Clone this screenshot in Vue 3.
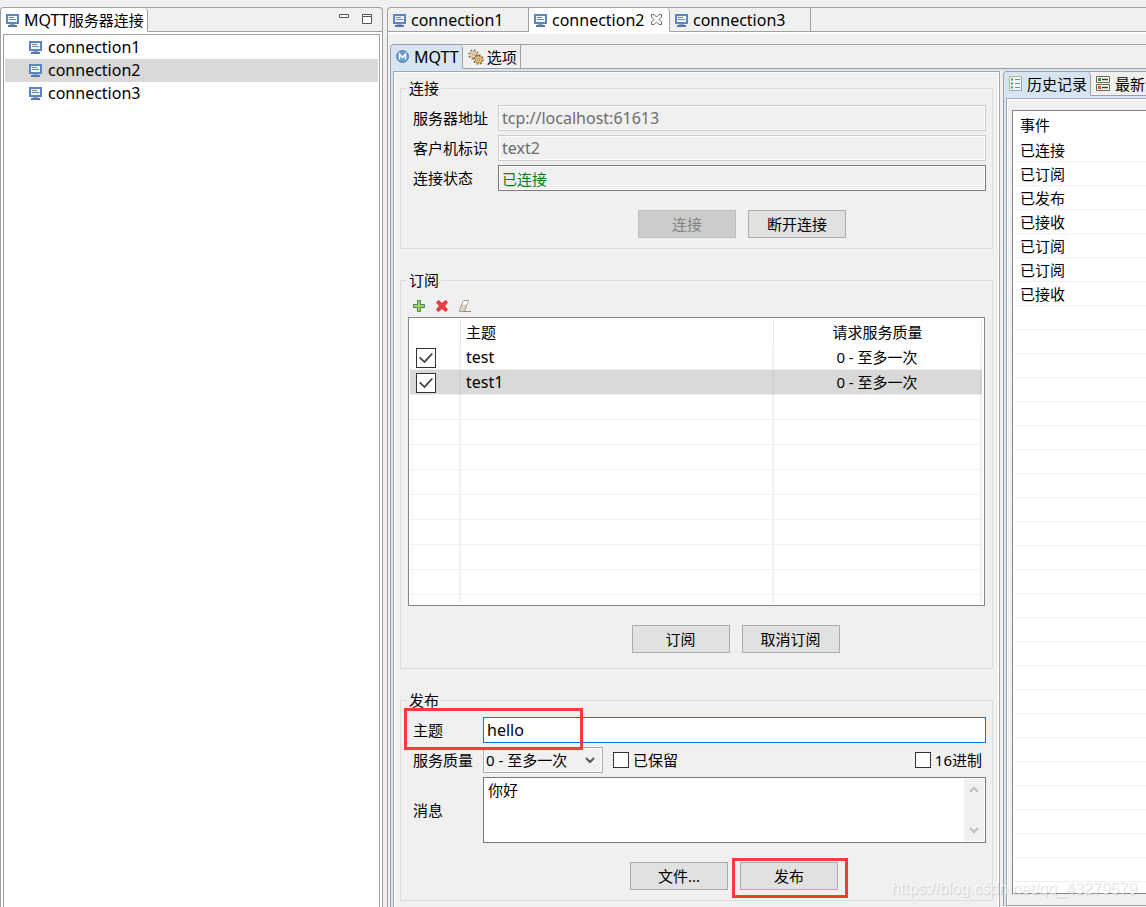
<script setup>
import { ref, h } from 'vue'

const connections = ['connection1', 'connection2', 'connection3']
const active = ref('connection2')
const subscriptions = ref([
  { topic: 'test', qos: '0 - 至多一次', on: true },
  { topic: 'test1', qos: '0 - 至多一次', on: true },
])
const selectedRow = ref(1)
const events = ['已连接', '已订阅', '已发布', '已接收', '已订阅', '已订阅', '已接收']
const emptyEvents = 25
const server = ref('tcp://localhost:61613')
const client = ref('text2')
const topic = ref('hello')
const qos = ref('0 - 至多一次')
const message = ref('你好')
const retained = ref(false)
const hex = ref(false)

const MonitorIcon = () =>
  h('svg', { width: 13, height: 14, viewBox: '0 -1 13 14', 'aria-hidden': 'true' }, [
    h('path', { d: 'M0 0h13v10H0z', fill: '#5b86bd' }),
    h('path', { d: 'M2 2h9v6H2z', fill: '#f1f6fc' }),
    h('path', { d: 'M3 3h5v1H3zM3 5h7v1H3z', fill: '#7187ad' }),
    h('path', { d: 'M4 10h5v1H4z', fill: '#8fa6c8' }),
    h('path', { d: 'M2 11h9v2H2z', fill: '#5876a8' }),
  ])
</script>

<template>
  <div class="workbench">
    <section class="folder explorer">
      <div class="tabs">
        <button class="tab selected white"><MonitorIcon /><span><span class="latin">MQTT</span>服务器连接</span></button>
        <div class="filler">
          <button class="tool" aria-label="最小化">
            <svg width="10" height="10" viewBox="0 0 10 10"><path d="M.5.5h9v3h-9z" fill="#fff" stroke="#555" /></svg>
          </button>
          <button class="tool" aria-label="最大化">
            <svg width="10" height="10" viewBox="0 0 10 10"><path d="M.5.5h9v9h-9zM0 2.500h10" fill="#fff" stroke="#555" /></svg>
          </button>
        </div>
      </div>
      <div class="tree-frame">
        <ul class="tree">
          <li v-for="c in connections" :key="c" class="latin" :class="{ chosen: c === active }"><MonitorIcon />{{ c }}</li>
        </ul>
      </div>
    </section>

    <section class="folder editors">
      <div class="tabs">
        <button v-for="c in connections" :key="c" class="tab wide latin" :class="{ 'selected white': c === active }" @click="active = c">
          <MonitorIcon />{{ c }}
          <svg v-if="c === active" class="close" width="11" height="11" viewBox="0 0 11 11">
            <path d="M.5.5h2.500l2.500 2.500L8 .5h2.500V3L8 5.500l2.500 2.500v2.500H8L5.500 8 3 10.500H.5V8L3 5.500.5 3z" fill="#fff" stroke="#666" />
          </svg>
        </button>
        <div class="filler"></div>
      </div>

      <div class="editor-body">
        <div class="folder inner">
          <div class="tabs">
            <button class="tab selected blue latin">
              <svg width="13" height="13" viewBox="0 0 13 13"><circle cx="6.500" cy="6.500" r="6" fill="#6a9bc9" stroke="#4f83b5" /><path d="M3.500 9.500V4l3 3.500 3-3.500v5.500" fill="none" stroke="#fff" stroke-width="1.500" /></svg>MQTT
            </button>
            <button class="tab options">
              <svg width="16" height="16" viewBox="0 0 16 16">
                <circle cx="5.500" cy="5.500" r="4.500" fill="none" stroke="#8a6a4a" stroke-width="1.500" stroke-dasharray="1.800 1.700" />
                <circle cx="5.500" cy="5.500" r="3" fill="#f6ead0" stroke="#b5976e" />
                <circle cx="5.500" cy="5.500" r="1" fill="#fff" stroke="#a5845c" />
                <circle cx="10.500" cy="10.500" r="4.500" fill="none" stroke="#87602f" stroke-width="1.500" stroke-dasharray="1.800 1.700" />
                <circle cx="10.500" cy="10.500" r="3.500" fill="#f8dc94" stroke="#a98048" />
                <circle cx="10.500" cy="10.500" r="1.300" fill="#fff" stroke="#8c6534" />
              </svg>选项
            </button>
            <div class="filler"></div>
          </div>

          <div class="panes">
            <form class="form" @submit.prevent>
              <fieldset>
                <legend>连接</legend>
                <div class="fields connect">
                  <label for="server">服务器地址</label>
                  <input id="server" v-model="server" class="text off latin" disabled />
                  <label for="client">客户机标识</label>
                  <input id="client" v-model="client" class="text off latin" disabled />
                  <label for="state">连接状态</label>
                  <input id="state" class="text state" value="已连接" readonly />
                  <div class="buttons">
                    <button class="btn" disabled>连接</button>
                    <button class="btn">断开连接</button>
                  </div>
                </div>
              </fieldset>

              <fieldset class="subs">
                <legend>订阅</legend>
                <div class="toolbar">
                  <button class="tool" aria-label="添加">
                    <svg width="14" height="14" viewBox="0 0 14 14"><path d="M5.500 1.500h3v4h4v3h-4v4h-3v-4h-4v-3h4z" fill="#a9cf55" stroke="#3f8f5b" /></svg>
                  </button>
                  <button class="tool" aria-label="移除">
                    <svg width="14" height="14" viewBox="0 0 14 14"><path d="M1.500 3.500l2-2L7 4.500l3.500-3 2 2L9.500 7l3 3.500-2 2L7 9.500l-3.500 3-2-2L4.500 7z" fill="#ee3f45" stroke="#d2343a" /></svg>
                  </button>
                  <button class="tool" aria-label="清除">
                    <svg width="14" height="14" viewBox="0 0 14 14"><path d="M5.500 1.500h5L6.500 12.500h-5v-2z" fill="#ddd3c4" stroke="#aa9c8a" /><path d="M5.500 2h4.500L8.500 5.500H4.500z" fill="#fff" /><path d="M6 12.500h7" stroke="#a08c72" /></svg>
                  </button>
                </div>
                <div class="grid-frame">
                  <table class="grid">
                    <colgroup><col class="c-check" /><col class="c-topic" /><col class="c-qos" /></colgroup>
                    <thead>
                      <tr><th></th><th>主题</th><th>请求服务质量</th></tr>
                    </thead>
                    <tbody>
                      <tr v-for="(s, i) in subscriptions" :key="s.topic" :class="{ chosen: i === selectedRow }" @click="selectedRow = i">
                        <td><input v-model="s.on" type="checkbox" class="check big" :aria-label="s.topic" /></td>
                        <td class="latin">{{ s.topic }}</td>
                        <td>{{ s.qos }}</td>
                      </tr>
                      <tr v-for="n in 8" :key="n"><td></td><td></td><td></td></tr>
                      <tr class="rest"><td></td><td></td><td></td></tr>
                    </tbody>
                  </table>
                </div>
                <div class="buttons under-grid">
                  <button class="btn">订阅</button>
                  <button class="btn">取消订阅</button>
                </div>
              </fieldset>

              <fieldset>
                <legend>发布</legend>
                <div class="fields publish">
                  <span class="mark topic-mark"></span>
                  <label for="topic">主题</label>
                  <input id="topic" v-model="topic" class="text focus latin" />
                  <label for="qos">服务质量</label>
                  <div class="line">
                    <span class="combo">
                      <select id="qos" v-model="qos">
                        <option>0 - 至多一次</option>
                        <option>1 - 至少一次</option>
                        <option>2 - 刚好一次</option>
                      </select>
                      <svg width="10" height="7" viewBox="0 0 10 7"><path d="M1 1l4 4 4-4" fill="none" stroke="#555" stroke-width="2" /></svg>
                    </span>
                    <label class="option"><input v-model="retained" type="checkbox" class="check" />已保留</label>
                    <label class="option last"><input v-model="hex" type="checkbox" class="check" />16进制</label>
                  </div>
                  <label for="message">消息</label>
                  <div class="area">
                    <textarea id="message" v-model="message"></textarea>
                    <div class="scroll">
                      <svg width="10" height="7" viewBox="0 0 10 7"><path d="M1 6l4-4 4 4" fill="none" stroke="#bfbfbf" stroke-width="2" /></svg>
                      <svg width="10" height="7" viewBox="0 0 10 7"><path d="M1 1l4 4 4-4" fill="none" stroke="#bfbfbf" stroke-width="2" /></svg>
                    </div>
                  </div>
                  <div class="buttons">
                    <button class="btn">文件...</button>
                    <span class="marked"><button class="btn">发布</button><span class="mark button-mark"></span></span>
                  </div>
                </div>
              </fieldset>
            </form>

            <section class="folder history">
              <div class="tabs">
                <button class="tab selected blue">
                  <svg width="13" height="15" viewBox="0 0 13 15"><path d="M.5.5h12v14H.5z" fill="#eef5fb" stroke="#91a9bd" /><path d="M.5 14V.5H12" fill="none" stroke="#b9b88c" /><path d="M6 3.500h5M6 7.500h5M6 11.500h5" stroke="#7186b5" /><path d="M2 2.500h2v2H2zM2 6.500h2v2H2zM2 10.500h2v2H2z" fill="#3c9b64" /></svg>历史记录
                </button>
                <button class="tab">
                  <svg width="14" height="15" viewBox="0 0 14 15"><path d="M.5.5h13v6H.5zM.5 8.500h13v6H.5z" fill="#fdfdf2" stroke="#6b6a4b" /><path d="M6 3.500h6M6 11.500h6" stroke="#343b61" stroke-width="1.500" /><path d="M2 2h3v3H2z" fill="#3b8e48" /><path d="M2 10h3v3H2z" fill="#e0522d" /></svg>最新消息
                </button>
                <div class="filler"></div>
              </div>
              <div class="history-body">
                <div class="history-frame">
                  <table class="events">
                    <thead><tr><th>事件</th></tr></thead>
                    <tbody>
                      <tr v-for="(e, i) in events" :key="i"><td>{{ e }}</td></tr>
                      <tr v-for="n in emptyEvents" :key="'e' + n"><td></td></tr>
                    </tbody>
                  </table>
                </div>
              </div>
            </section>
          </div>
        </div>
      </div>
    </section>
    <div class="watermark">https://blog.csdn.net/qq_43279579</div>
  </div>
</template>

<style>
body { background: #f0f0f0; }
</style>

<style scoped>
.workbench, .workbench * { box-sizing: border-box; }
.workbench {
  position: relative;
  display: grid;
  grid-template-columns: 383fr 759fr;
  gap: 4px;
  height: 100vh;
  padding-top: 7px;
  overflow: hidden;
  background: #f0f0f0;
  color: #000;
  font: 15px/20px "Noto Sans", "Noto Sans CJK SC", sans-serif;
}
button, input, select, textarea { font: inherit; color: inherit; margin: 0; }
.latin { font-size: 16px; }
svg { display: block; flex: none; }

.folder {
  display: flex;
  flex-direction: column;
  min-width: 0;
  min-height: 0;
  border: 1px solid #a0a0a0;
  border-bottom: 0;
  border-radius: 4px 4px 0 0;
}
.tabs { display: flex; flex: none; height: 24px; overflow: hidden; }
.tab {
  display: flex;
  flex: none;
  align-items: center;
  gap: 5px;
  padding: 0 3px 0 5px;
  border: 0;
  border-right: 1px solid #a0a0a0;
  border-bottom: 1px solid #a0a0a0;
  background: none;
  white-space: nowrap;
}
.tab.wide { width: 141px; }
.tab.white { background: #fff; border-bottom-color: #fff; }
.tab.blue { background: #d7e4f2; border-bottom-color: #d7e4f2; }
.tab.selected { border-radius: 4px 4px 0 0; }
.tab.options { gap: 3px; }
.close { margin-left: 2px; }
.filler {
  display: flex;
  flex: 1;
  justify-content: flex-end;
  gap: 13px;
  padding: 4px 10px 0 0;
  border-bottom: 1px solid #a0a0a0;
}
.tool { display: block; height: 14px; padding: 0; border: 0; background: none; }

.tree-frame { flex: 1; padding: 2px 2px 0; background: #fff; }
.tree {
  height: 100%;
  margin: 0;
  padding: 1px;
  list-style: none;
  border: 1px solid #a0a0a0;
  border-bottom: 0;
  background: #fff;
}
.tree li { display: flex; align-items: center; gap: 6px; height: 23px; padding: 0 0 1px 24px; }
.chosen { background: #d9d9d9; }

.editors { border-right: 0; border-top-right-radius: 0; }
.editor-body { display: flex; flex: 1; min-height: 0; padding: 10px 0 0 2px; border-top: 2px solid #fff; }
.inner { flex: 1; border-right: 0; border-top-right-radius: 0; }
.panes {
  display: grid;
  flex: 1;
  grid-template-columns: 610fr 143fr;
  min-height: 0;
  border: solid #d7e4f2;
  border-width: 2px 0 0 2px;
}
.form {
  display: flex;
  flex-direction: column;
  gap: 21px;
  min-width: 0;
  margin-right: 3px;
  padding: 6px 6px 0;
  border: 1px solid #a0a8b0;
  border-bottom: 0;
  box-shadow: inset 1px 1px #fff, inset -1px 0 #fff;
}
fieldset { min-width: 0; margin: 0; padding: 0 6px 10px 7px; border: 1px solid #dcdcdc; }
fieldset.subs { padding-bottom: 15px; }
legend { margin-left: -1px; padding: 0 2px; }
.fields { position: relative; display: grid; align-items: center; row-gap: 4px; padding-left: 5px; }
.connect { grid-template-columns: 85px 1fr; padding-top: 7px; }
.publish { grid-template-columns: 70px 1fr; padding-top: 7px; }
.text {
  width: 100%;
  height: 26px;
  padding: 0 3px;
  border: 1px solid #7a7a7a;
  border-radius: 0;
  background: #fff;
  outline: 0;
}
.text.off { color: #6d6d6d; border-color: #ccc; background: #f0f0f0; box-shadow: inset 0 0 0 1px #fff; }
.text.state { color: #008016; background: #f0f0f0; box-shadow: inset 0 0 0 1px #fff; }
.text.focus { border-color: #0078d7; }
.buttons { display: flex; grid-column: 2; justify-content: center; gap: 12px; padding-top: 15px; }
.publish .buttons { padding-right: 1px; }
.btn { width: 98px; height: 28px; padding: 0; border: 1px solid #adadad; background: #e1e1e1; }
.btn:disabled { color: #838383; border-color: #bfbfbf; background: #ccc; }

.toolbar { display: flex; gap: 9px; padding: 9px 0 4px 4px; }
.grid-frame { margin-right: 1px; padding: 1px 2px 2px 1px; border: 1px solid #828790; background: #fff; }
.grid { width: 100%; table-layout: fixed; border-collapse: separate; border-spacing: 0; }
.c-check { width: 51px; }
.c-qos { width: 208px; }
.grid th, .grid td {
  height: 25px;
  padding: 0 5px;
  font-weight: normal;
  text-align: left;
  border-right: 2px solid #edf2f9;
  border-bottom: 1px solid #f0f0f0;
}
.grid th { height: 26px; border-right: 1px solid #e5e5e5; border-bottom: 0; }
.grid th:last-child, .grid td:last-child { text-align: center; }
.grid .chosen td { border-right-color: #cdd2d8; }
.grid .rest td { height: 8px; border-bottom: 0; }
.under-grid { padding: 19px 0 0 77px; }
.grid td:first-child { padding: 2px 6px 0; }

.check { display: grid; flex: none; width: 16px; height: 16px; place-items: center; appearance: none; border: 1px solid #333; background: #fff; }
.check.big { width: 20px; height: 20px; }
.check:checked::after {
  content: "";
  width: 14px;
  height: 12px;
  background: #444;
  clip-path: polygon(0 50%, 10% 40%, 38% 72%, 90% 8%, 100% 16%, 40% 94%);
}

.line { display: flex; align-items: center; height: 26px; }
.combo { position: relative; width: 120px; height: 26px; margin-right: 10px; }
.combo select {
  width: 100%;
  height: 100%;
  padding: 0 2px;
  appearance: none;
  border: 1px solid #adadad;
  border-radius: 0;
  background: #f0f0f0;
  box-shadow: inset 0 0 0 1px #fff;
}
.combo svg { position: absolute; top: 10px; right: 8px; pointer-events: none; }
.option { display: flex; align-items: center; gap: 4px; }
.option.last { margin-left: auto; padding-right: 4px; }
.area { display: flex; height: 66px; padding: 1px; border: 1px solid #7a7a7a; background: #fff; }
.area textarea { flex: 1; min-width: 0; padding: 1px 3px; resize: none; border: 0; outline: 0; background: none; }
.scroll { display: flex; flex-direction: column; justify-content: space-between; align-items: center; width: 20px; padding: 7px 0; background: #f0f0f0; }

.marked { position: relative; }
.mark { position: absolute; z-index: 1; border: 3px solid #fc3a3a; pointer-events: none; }
.topic-mark { left: -4px; top: -2px; width: 179px; height: 42px; }
.button-mark { inset: -4px -10px -8px -8px; }

.history { margin-bottom: 1px; border-right: 0; border-top-right-radius: 0; overflow: hidden; }
.history-body {
  flex: 1;
  min-height: 0;
  padding: 0;
  border: solid #d7e4f2;
  border-width: 2px 0 0 2px;
}
.history-frame {
  height: 100%;
  padding: 11px 0 11px 5px;
  border: 1px solid #a0a8b0;
  border-right: 0;
  box-shadow: inset 1px 1px #fff;
}
.events {
  display: block;
  height: 100%;
  overflow: hidden;
  padding: 1px 0 0 1px;
  border: 1px solid #828790;
  border-right: 0;
  border-spacing: 0;
  background: #fff;
}
.events thead, .events tbody { display: block; }
.events tr { display: flex; }
.events th, .events td { flex: 1; height: 24px; padding: 2px 6px 1px; font-weight: normal; text-align: left; border-bottom: 1px solid #f0f0f0; }
.events th { height: 26px; padding-top: 3px; border: 0; }

.watermark {
  position: absolute;
  right: 9px;
  bottom: 8px;
  color: rgba(255, 255, 255, 0.7);
  font: 16px/20px "Liberation Sans", Arial, sans-serif;
  text-shadow: 1px 1px 1px rgba(0, 0, 0, 0.15);
  pointer-events: none;
}
</style>
